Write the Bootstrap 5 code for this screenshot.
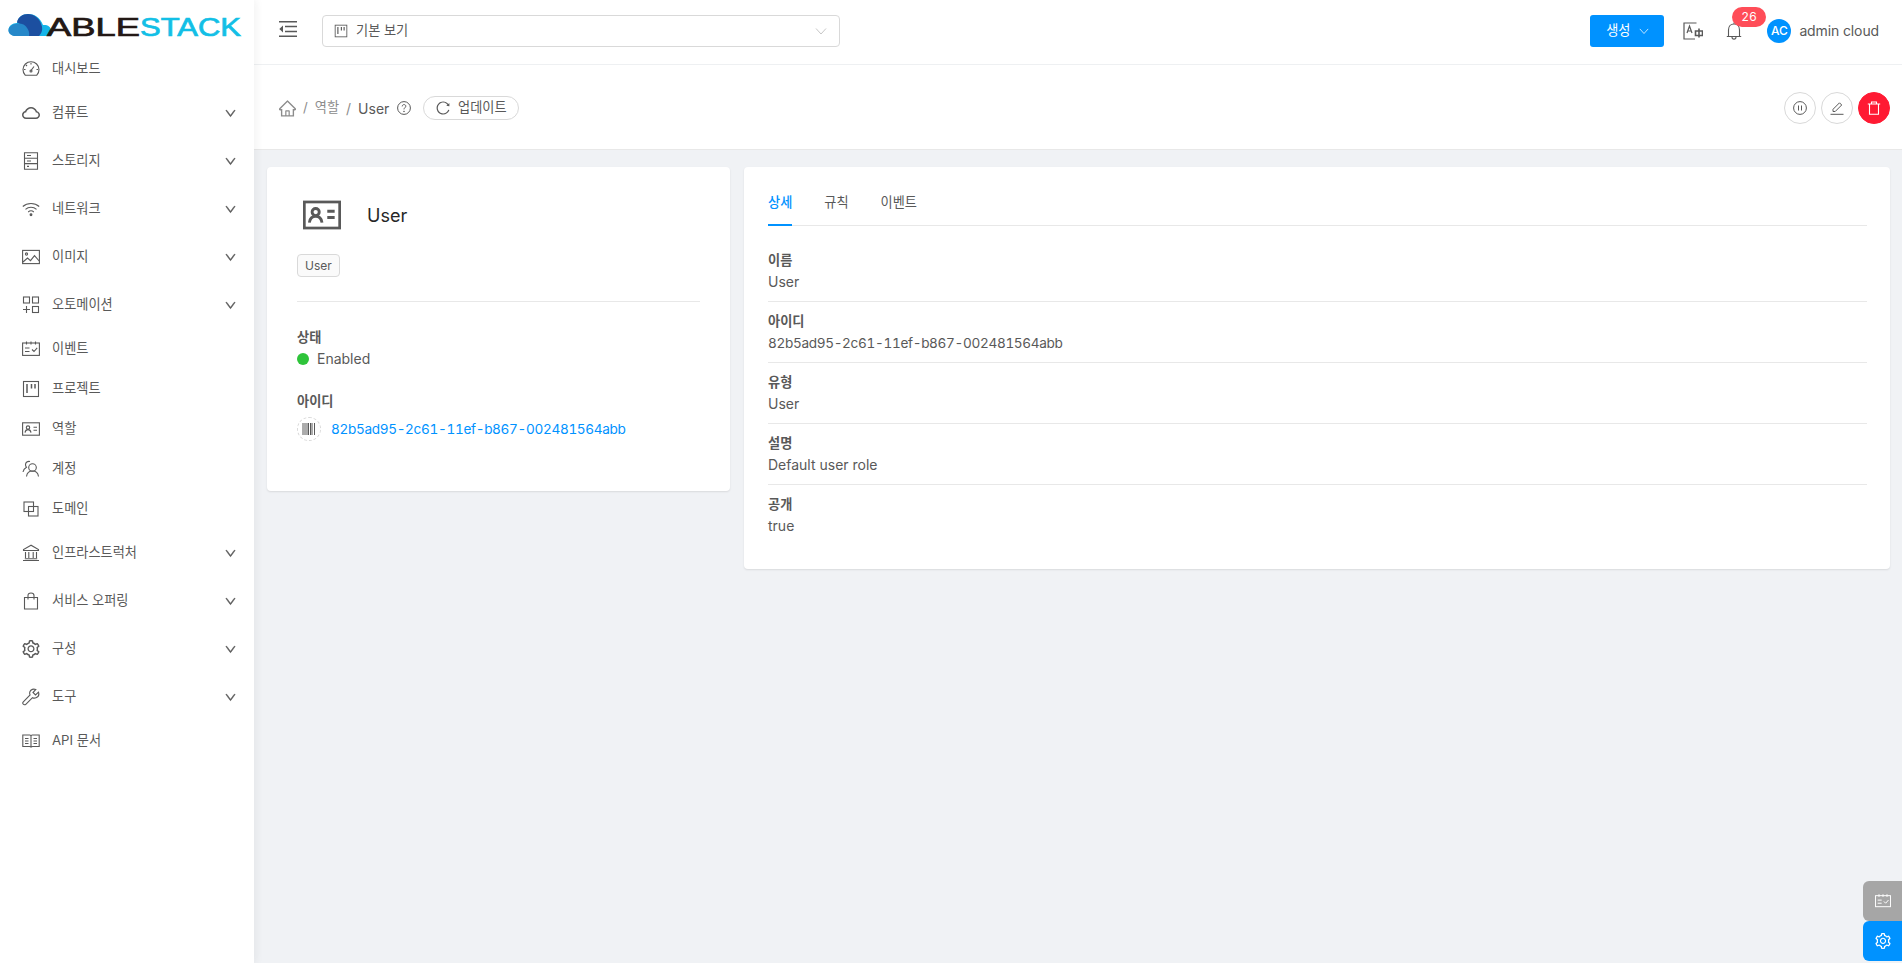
<!DOCTYPE html>
<html lang="ko">
<head>
<meta charset="utf-8">
<title>ABLESTACK</title>
<link rel="stylesheet" href="https://cdn.jsdelivr.net/npm/bootstrap@5.3.0/dist/css/bootstrap.min.css">
<style>
html,body{height:100%}
body{font-family:Inter,"Noto Sans CJK KR",sans-serif;font-size:14px;color:#595959;background:#f0f2f5;overflow:hidden}
svg{display:block;flex:none}
.ko{font-size:13.2px}
.uid{font-feature-settings:"tnum";font-variant-numeric:tabular-nums;font-size:13.6px;letter-spacing:-.34px}
.app-shell{height:963px}
.side{width:254px;flex:none;background:#fff;box-shadow:2px 0 8px rgba(29,35,41,.06);z-index:2}
.brand{height:49px;padding:13px 0 0 8px}
.brand text{font-family:"Liberation Sans",sans-serif;font-weight:400;font-size:25px;stroke-width:.7px}
.side-item{height:40px;padding:0 17px 0 22px;color:#595959;text-decoration:none;gap:12px}
.side-item.tall{height:48px}
.side-item .chev{margin-left:auto}
.ico{width:18px;height:18px;fill:none;stroke:#595959;stroke-width:1.1}
.ico-fill{width:18px;height:18px;fill:#595959}
.chev{width:11px;height:11px;fill:#595959;stroke:#595959;stroke-width:40px;margin-right:1px}
.main-col{min-width:0}
.topbar{height:65px;background:#fff;border-bottom:1px solid #eef0f2;padding:0 23px 3px 25px}
.view-select{width:518px;height:32px;border:1px solid #d9d9d9;border-radius:4px;padding:0 11px;margin-left:25px;gap:8px;background:#fff}
.view-select .chev{margin-left:auto;stroke-width:0}
.burger{margin-bottom:3px}
.make-btn{width:74px;height:32px;background:#0092ff;border:0;border-radius:3px;color:#fff;gap:8px;padding:0}
.make-btn:hover{background:#0092ff;color:#fff}
.make-btn .chev{stroke-width:0;margin-right:0}
.lang-ico{margin-left:19px}
.alert-wrap{width:34px;height:34px;margin-left:14px}
.count-pill{top:-7px;left:15px;min-width:34px;height:20px;padding:0 8px;background:#ff4d58;border-radius:10px;font-size:12px;font-weight:400;line-height:20px;letter-spacing:.4px}
.avatar-dot{width:24px;height:24px;border-radius:50%;background:#0092ff;color:#fff;font-size:12px;font-weight:500;margin-left:16px}
.user-name{letter-spacing:-.12px}
.crumbbar{height:85px;background:#fff;border-bottom:1px solid #e8e8e8;padding:2px 12px 0 25px}
.crumbbar .breadcrumb{margin:0;--bs-breadcrumb-divider-color:#8c8c8c;--bs-breadcrumb-item-active-color:#595959;--bs-breadcrumb-item-padding-x:7px}
.crumbbar .breadcrumb-item{display:flex;align-items:center}
.crumbbar .faded{color:#8c8c8c}
.refresh-btn{height:24px;width:96px;border:1px solid #d9d9d9;border-radius:12px;background:#fff;color:#595959;gap:8px;padding:0;margin-left:12px}
.act-group{gap:5px}
.round-act{width:32px;height:32px;border-radius:50%;border:1px solid #d9d9d9;background:#fff;padding:0}
.round-act.danger{background:#ff1a33;border-color:#ff1a33}
.content-area{padding:17px 12px 0 13px;gap:14px;align-items:flex-start}
.panel{border:0;border-radius:4px;box-shadow:0 1px 2px rgba(0,0,0,.1);color:#595959}
.panel-left{width:463px;height:324px;padding:30px 30px 0}
.panel-right{flex:1;height:402px;padding:12px 23px 0 24px}
.head-ico{width:38px;height:30px;margin-left:6px;stroke-width:1.35}
.head-row{height:36px}
.head-name{font-size:18px;color:#262626;font-weight:400;margin-left:26px}
.user-tag{height:23px;padding:0 7px;margin-top:21px;background:#fafafa;border:1px solid #d9d9d9;border-radius:4px;font-size:12px;color:#595959;line-height:21px}
.rule{height:1px;background:#e8e8e8;margin:24px 0 0}
.lab{font-weight:600;font-size:13.2px;line-height:22px;color:#595959}
.first-lab{margin-top:24px}
.second-lab{margin-top:20px}
.status-dot{width:12px;height:12px;border-radius:50%;background:#2ec43a;margin-right:8px}
.status-line{line-height:22px}
.code-row{margin-top:5px}
.code-ring{width:24px;height:24px;border:1px dashed #d9d9d9;border-radius:50%;margin-right:10px}
.id-link{color:#0092ff;text-decoration:none}
.tab-strip{height:47px;border-bottom:1px solid #e8e8e8;gap:32px;--bs-nav-tabs-border-width:0}
.tab-strip .nav-link{padding:0;height:47px;line-height:46px;color:#595959;border:0;background:none;border-radius:0;position:relative}
.tab-strip .nav-link.active{color:#0092ff;font-weight:500;background:none;border-bottom:2px solid #0092ff}
.info-row{height:61px;border-bottom:1px solid #e8e8e8;padding:8px 0 0;line-height:22px;background:none;border-left:0;border-right:0;border-top:0;color:#595959}
.info-row:last-child{border-bottom:0}
.info-list{margin-top:15px}
.float-tab{right:0;width:39px;height:40px;border-radius:6px 0 0 6px;z-index:5}
.float-tab.grey{top:881px;background:#a6a6a6}
.float-tab.blue{top:921px;background:#0092ff}
.float-ico{width:16px;height:16px;stroke:#fff}
.mini-ico{width:14px;height:14px}
.thin-grey{width:12px;height:12px;color:#bfbfbf}
.thin-white{width:10px;height:10px;color:#fff}
</style>
</head>
<body>
<svg width="0" height="0" class="position-absolute">
<defs>
<symbol id="i-down" viewBox="64 64 896 896"><path d="M884 256h-75c-5.1 0-9.9 2.5-12.9 6.6L512 654.2 227.9 262.6c-3-4.1-7.8-6.6-12.9-6.6h-75c-6.5 0-10.3 7.4-6.5 12.7l352.6 486.1c12.8 17.6 39 17.6 51.7 0l352.6-486.1c3.9-5.3.1-12.7-6.4-12.7z"/></symbol>
<symbol id="i-thin" viewBox="0 0 12 12"><path d="M1 3.5 6 9l5-5.5" fill="none" stroke="currentColor" stroke-width=".9"/></symbol>
<symbol id="i-set" viewBox="64 64 896 896"><path d="M924.8 625.7l-65.5-56c3.1-19 4.7-38.4 4.7-57.8s-1.6-38.8-4.7-57.8l65.5-56a32.03 32.03 0 0 0 9.3-35.2l-.9-2.6a443.74 443.74 0 0 0-79.7-137.9l-1.8-2.1a32.12 32.12 0 0 0-35.1-9.5l-81.3 28.9c-30-24.6-63.5-44-99.7-57.6l-15.7-85a32.05 32.05 0 0 0-25.8-25.7l-2.7-.5c-52.1-9.4-106.9-9.4-159 0l-2.7.5a32.05 32.05 0 0 0-25.8 25.7l-15.8 85.4a351.86 351.86 0 0 0-99 57.4l-81.9-29.1a32 32 0 0 0-35.1 9.5l-1.8 2.1a446.02 446.02 0 0 0-79.7 137.9l-.9 2.6c-4.5 12.5-.8 26.5 9.3 35.2l66.3 56.6c-3.1 18.8-4.6 38-4.6 57.1 0 19.2 1.5 38.4 4.6 57.1L99 625.5a32.03 32.03 0 0 0-9.3 35.2l.9 2.6c18.1 50.4 44.9 96.9 79.7 137.9l1.8 2.1a32.12 32.12 0 0 0 35.1 9.5l81.9-29.1c29.8 24.5 63.1 43.9 99 57.4l15.8 85.4a32.05 32.05 0 0 0 25.8 25.7l2.7.5a449.4 449.4 0 0 0 159 0l2.7-.5a32.05 32.05 0 0 0 25.8-25.7l15.7-85a350 350 0 0 0 99.7-57.6l81.3 28.9a32 32 0 0 0 35.1-9.5l1.8-2.1c34.8-41.1 61.6-87.5 79.7-137.9l.9-2.6c4.5-12.3.8-26.3-9.3-35zM788.3 465.9c2.5 15.1 3.8 30.6 3.8 46.1s-1.3 31-3.8 46.1l-6.6 40.1 74.7 63.9a370.03 370.03 0 0 1-42.6 73.6L721 702.8l-31.4 25.8c-23.9 19.6-50.5 35-79.3 45.8l-38.1 14.3-17.9 97a377.5 377.5 0 0 1-85 0l-17.9-97.2-37.8-14.5c-28.5-10.8-55-26.2-78.7-45.7l-31.4-25.9-93.4 33.2c-17-22.9-31.2-47.6-42.6-73.6l75.5-64.5-6.5-40c-2.4-14.9-3.7-30.3-3.7-45.5 0-15.3 1.2-30.6 3.7-45.5l6.5-40-75.5-64.5c11.3-26.1 25.6-50.7 42.6-73.6l93.4 33.2 31.4-25.9c23.7-19.5 50.2-34.9 78.7-45.7l37.9-14.3 17.9-97.2c28.1-3.2 56.8-3.2 85 0l17.9 97 38.1 14.3c28.7 10.8 55.4 26.2 79.3 45.8l31.4 25.8 92.8-32.9c17 22.9 31.2 47.6 42.6 73.6L781.8 426l6.5 39.9zM512 326c-97.2 0-176 78.8-176 176s78.8 176 176 176 176-78.8 176-176-78.8-176-176-176zm79.2 255.2A111.6 111.6 0 0 1 512 614c-29.9 0-58-11.7-79.2-32.8A111.6 111.6 0 0 1 400 502c0-29.9 11.7-58 32.8-79.2C454 401.6 482.1 390 512 390c29.9 0 58 11.6 79.2 32.8A111.6 111.6 0 0 1 624 502c0 29.9-11.7 58-32.8 79.2z"/></symbol>
<symbol id="i-cloud" viewBox="64 64 896 896"><path d="M811.4 418.7C765.6 297.9 648.9 212 512.2 212S258.8 297.8 213 418.6C127.3 441.1 64 519.1 64 612c0 110.5 89.5 200 199.9 200h496.2C870.5 812 960 722.5 960 612c0-92.7-63.1-170.7-148.6-193.3zm36.3 281a123.07 123.07 0 0 1-87.6 36.3H263.9c-33.1 0-64.2-12.9-87.6-36.3A123.3 123.3 0 0 1 140 612c0-28 9.1-54.3 26.2-76.3a125.7 125.7 0 0 1 66.1-43.7l37.9-9.9 13.9-36.6c8.6-22.8 20.6-44.1 35.7-63.4a245.6 245.6 0 0 1 52.4-49.9c41.1-28.9 89.5-44.2 140-44.2s98.9 15.3 140 44.2c19.9 14 37.5 30.8 52.4 49.9 15.1 19.3 27.1 40.6 35.7 63.4l13.8 36.5 37.8 10c54.3 14.5 92.1 63.8 92.1 120 0 33.1-12.9 64.3-36.3 87.7z"/></symbol>
<symbol id="i-home" viewBox="64 64 896 896"><path d="M946.5 505L560.1 118.8l-25.9-25.9a31.5 31.5 0 0 0-44.4 0L77.5 505a63.9 63.9 0 0 0-18.8 46c.4 35.2 29.7 63.3 64.9 63.3h42.5V940h691.8V614.3h43.4c17.1 0 33.2-6.7 45.3-18.8a63.6 63.6 0 0 0 18.7-45.3c0-17-6.7-33.1-18.8-45.2zM568 868H456V664h112v204zm217.9-325.7V868H632V640c0-22.1-17.9-40-40-40H432c-22.1 0-40 17.9-40 40v228H238.1V542.3h-96l370-369.7 23.1 23.1L882 542.3h-96.1z"/></symbol>
<symbol id="i-reload" viewBox="64 64 896 896"><path d="M909.1 209.3l-56.4 44.1C775.8 155.1 656.2 92 521.9 92 290 92 102.3 279.5 102 511.5 101.7 743.7 289.8 932 521.9 932c181.3 0 335.8-115 394.6-276.1 1.5-4.2-.7-8.9-4.9-10.3l-56.7-19.5a8 8 0 0 0-10.1 4.8c-1.8 5-3.8 10-5.9 14.9-17.3 41-42.1 77.8-73.7 109.4A344.77 344.77 0 0 1 655.9 829c-42.3 17.9-87.4 27-133.8 27-46.5 0-91.5-9.1-133.8-27A341.5 341.5 0 0 1 279 755.2a342.16 342.16 0 0 1-73.7-109.4c-17.9-42.4-27-87.4-27-133.9s9.1-91.5 27-133.9c17.3-41 42.1-77.8 73.7-109.4 31.6-31.6 68.4-56.4 109.3-73.8 42.3-17.9 87.4-27 133.8-27 46.5 0 91.5 9.1 133.8 27a341.5 341.5 0 0 1 109.3 73.8c9.9 9.9 19.2 20.4 27.8 31.4l-60.2 47a8 8 0 0 0 3 14.1l175.6 43c5 1.2 9.9-2.6 9.9-7.7l.8-180.9c-.1-6.6-7.8-10.3-13-6.2z"/></symbol>
<symbol id="i-event" viewBox="0 0 18 18"><rect x=".6" y="3" width="16.8" height="12.4"/><path d="M4.5 1.4v3M9 1.4v3M13.5 1.4v3M3 8h4.5M3 11.5h4.5M10 9.5l2 2 3.2-3.6"/></symbol>
<symbol id="i-board" viewBox="0 0 18 18"><rect x="1.5" y="1.5" width="15" height="15"/><path d="M5 4v9M9.5 4v4.5M13 4v4.5" stroke-width="1.5"/></symbol>
<symbol id="i-idcard" viewBox="0 0 18 14"><rect x=".6" y=".8" width="16.8" height="12.4"/><circle cx="6" cy="5.6" r="1.7"/><path d="M3 10.6c.3-2 1.4-3 3-3s2.7 1 3 3M11.5 5.2h3.5M11.5 8.2h3.5"/></symbol>
</defs>
</svg>

<div class="app-shell d-flex">
<aside class="side">
  <div class="brand">
    <svg width="234" height="26" viewBox="0 0 234 26">
      <path d="M8 23h29c3.600 0 6-2.400 6-5.500 0-2.800-2-5-5-5.500h-3C32 4 26 1 20 1 14.500 1 10 4 9 10 4.500 10 .5 13 .5 17c0 3.500 3.200 6 7.500 6z" fill="#14b4e8"/>
      <path d="M17 23h14c3-3 4-7 2.500-11C31.500 5 26 1 20 1 14.500 1 10 4 9 9.500c5 1.500 9 7.500 8 13.500z" fill="#1c4fa0"/>
      <path d="M8 23h13c1-4-1.500-9-5.500-11.500C9 9 .5 12 .5 17.500 .5 21 4 23 8 23z" fill="#2688c9"/>
      <text x="39" y="22.500" textLength="93" lengthAdjust="spacingAndGlyphs" fill="#231815" stroke="#231815">ABLE</text>
      <text x="132" y="22.500" textLength="101" lengthAdjust="spacingAndGlyphs" fill="#12bfe6" stroke="#12bfe6">STACK</text>
    </svg>
  </div>
  <nav class="nav flex-column">
    <a class="side-item d-flex align-items-center" href="#"><svg class="ico" viewBox="0 0 18 18"><path d="M3.200 15.200a8 8 0 1 1 11.600 0zM9 10.500l3-4M9 3v1.500M4 5l1 1M2 9.500h1.500M14.500 9.500H16"/><circle cx="9" cy="11" r="1"/></svg><span class="ko">대시보드</span></a>
    <a class="side-item tall d-flex align-items-center" href="#"><svg class="ico-fill"><use href="#i-cloud"/></svg><span class="ko">컴퓨트</span><svg class="chev"><use href="#i-down"/></svg></a>
    <a class="side-item tall d-flex align-items-center" href="#"><svg class="ico" viewBox="0 0 18 18"><path d="M2.500.8h13v16.400h-13zM2.500 6.200h13M2.500 11.600h13M5 3.500h4M5 9h4M5 14.400h2"/></svg><span class="ko">스토리지</span><svg class="chev"><use href="#i-down"/></svg></a>
    <a class="side-item tall d-flex align-items-center" href="#"><svg class="ico" viewBox="0 0 18 18"><path d="M.8 6.500c4.500-4 11.900-4 16.400 0M3.500 9.300c3-2.700 8-2.700 11 0M6.200 12c1.600-1.400 4-1.400 5.600 0"/><circle cx="9" cy="14.800" r=".9" fill="#595959"/></svg><span class="ko">네트워크</span><svg class="chev"><use href="#i-down"/></svg></a>
    <a class="side-item tall d-flex align-items-center" href="#"><svg class="ico" viewBox="0 0 18 18"><rect x=".6" y="2.400" width="16.800" height="13.200"/><circle cx="4.500" cy="6" r="1.100"/><path d="M1 14l4.500-4 3 2.600 4-5 4.700 5.400"/></svg><span class="ko">이미지</span><svg class="chev"><use href="#i-down"/></svg></a>
    <a class="side-item tall d-flex align-items-center" href="#"><svg class="ico" viewBox="0 0 18 18"><rect x="1.500" y="1" width="6" height="6"/><rect x="10.500" y="1" width="6" height="6"/><rect x="10.500" y="10.500" width="6" height="6"/><path d="M1 13.500h7M4.500 10v7"/></svg><span class="ko">오토메이션</span><svg class="chev"><use href="#i-down"/></svg></a>
    <a class="side-item d-flex align-items-center" href="#"><svg class="ico"><use href="#i-event"/></svg><span class="ko">이벤트</span></a>
    <a class="side-item d-flex align-items-center" href="#"><svg class="ico"><use href="#i-board"/></svg><span class="ko">프로젝트</span></a>
    <a class="side-item d-flex align-items-center" href="#"><svg class="ico"><use href="#i-idcard"/></svg><span class="ko">역할</span></a>
    <a class="side-item d-flex align-items-center" href="#"><svg class="ico" viewBox="0 0 18 18"><circle cx="10.500" cy="7.500" r="3.800"/><path d="M4.500 16.500c.5-3.600 2.800-5.500 6-5.500s5.500 1.900 6 5.500M8 1.500c-2.500-.6-4.500 1-4.500 3.300 0 1 .4 1.800 1 2.500C2.700 8.300 1.500 9.800 1 12"/></svg><span class="ko">계정</span></a>
    <a class="side-item d-flex align-items-center" href="#"><svg class="ico" viewBox="0 0 18 18"><rect x="2" y="2" width="9.500" height="9.500"/><rect x="6.500" y="6.500" width="9.500" height="9.500"/></svg><span class="ko">도메인</span></a>
    <a class="side-item tall d-flex align-items-center" href="#"><svg class="ico" viewBox="0 0 18 18"><path d="M9 1.200 1.500 5.500v1h15v-1zM1 16.500h16M2.800 14.800h12.400M3.500 8v6M6.800 8v6M11.200 8v6M14.500 8v6"/></svg><span class="ko">인프라스트럭처</span><svg class="chev"><use href="#i-down"/></svg></a>
    <a class="side-item tall d-flex align-items-center" href="#"><svg class="ico" viewBox="0 0 18 18"><path d="M2.500 5.500h13v11.500h-13zM6 7.500V3.500c0-3.300 6-3.300 6 0v4"/></svg><span class="ko">서비스 오퍼링</span><svg class="chev"><use href="#i-down"/></svg></a>
    <a class="side-item tall d-flex align-items-center" href="#"><svg class="ico-fill"><use href="#i-set"/></svg><span class="ko">구성</span><svg class="chev"><use href="#i-down"/></svg></a>
    <a class="side-item tall d-flex align-items-center" href="#"><svg class="ico" viewBox="0 0 18 18"><path d="M16.500 4.200 13.500 7 11 4.500 13.800 1.500C11.500.6 8.800 1.400 8 3.500c-.5 1.300-.4 2.600.1 3.500L1.300 13.800c-.8.800-.6 1.700 0 2.400.7.700 1.700.9 2.500.1L10.500 9.700c1 .5 2.300.6 3.500.1 2.200-.9 3.300-3.300 2.500-5.600z"/></svg><span class="ko">도구</span><svg class="chev"><use href="#i-down"/></svg></a>
    <a class="side-item d-flex align-items-center" href="#"><svg class="ico" viewBox="0 0 18 18"><path d="M.8 3h7c.7 0 1.200.5 1.200 1.200 0-.7.500-1.200 1.200-1.200h7v11.500h-6.700c-.8 0-1.500.4-1.500 1-.1-.6-.7-1-1.500-1H.8zM9 4.200v11.300M3 6.500h3.500M3 9h3.500M3 11.500h3.500M11.500 6.500H15M11.500 9H15M11.500 11.500H15"/></svg><span class="ko">API 문서</span></a>
  </nav>
</aside>

<div class="main-col flex-grow-1 d-flex flex-column">
  <header class="topbar d-flex align-items-center">
    <svg class="burger" width="18" height="16" viewBox="0 0 18 16" fill="#595959"><path d="M0 0h18v1.500H0zM0 14.500h18V16H0zM6 4.800h12v1.400H6zM6 9.800h12v1.400H6zM4 4.500v7L.3 8z"/></svg>
    <div class="view-select d-flex align-items-center">
      <svg class="ico mini-ico"><use href="#i-board"/></svg>
      <span class="ko">기본 보기</span>
      <svg class="chev thin-grey"><use href="#i-thin"/></svg>
    </div>
    <div class="ms-auto d-flex align-items-center">
      <button class="btn make-btn d-flex align-items-center justify-content-center"><span class="ko">생성</span><svg class="chev thin-white"><use href="#i-thin"/></svg></button>
      <svg class="lang-ico" width="20" height="20" viewBox="0 0 20 18" fill="none" stroke="#595959" stroke-width="1.200"><path d="M13.500 1H1v16h11M10.500 17h1"/><path d="M4 11l2.500-7L9 11M4.800 9h3.400"/><path d="M12.500 9h7v4.500h-7zM16 6.500v9" stroke-width="1.600"/></svg>
      <div class="alert-wrap position-relative d-flex align-items-center justify-content-center">
        <svg width="16" height="18" viewBox="0 0 16 18" fill="none" stroke="#595959" stroke-width="1.100"><path d="M.8 14.500h14.400M2.500 14.500V8c0-3.500 2.200-6 5.500-6s5.500 2.500 5.500 6v6.500M8 .5V2M6 15c0 2.800 4 2.800 4 0"/></svg>
        <span class="badge count-pill position-absolute">26</span>
      </div>
      <span class="avatar-dot d-flex align-items-center justify-content-center">AC</span>
      <span class="ms-2 user-name">admin cloud</span>
    </div>
  </header>

  <div class="crumbbar d-flex align-items-center">
    <ol class="breadcrumb align-items-center">
      <li class="breadcrumb-item"><svg width="17" height="17" fill="#8c8c8c"><use href="#i-home"/></svg></li>
      <li class="breadcrumb-item faded ko">역할</li>
      <li class="breadcrumb-item active">User</li>
    </ol>
    <svg class="ms-2" width="14" height="14" viewBox="0 0 14 14" fill="none" stroke="#595959"><circle cx="7" cy="7" r="6.400"/><path d="M5.200 5.400C5.200 3 8.800 3 8.800 5.200c0 1.500-1.800 1.500-1.800 3.200"/><circle cx="7" cy="10.400" r=".4"/></svg>
    <button class="btn refresh-btn d-flex align-items-center justify-content-center"><svg width="14" height="14" fill="#595959"><use href="#i-reload"/></svg><span class="ko">업데이트</span></button>
    <div class="ms-auto d-flex act-group align-items-center">
      <button class="btn round-act d-flex align-items-center justify-content-center"><svg width="14" height="14" viewBox="0 0 14 14" fill="none" stroke="#595959"><circle cx="7" cy="7" r="6.400"/><path d="M5.500 4.500v5M8.500 4.500v5"/></svg></button>
      <button class="btn round-act d-flex align-items-center justify-content-center"><svg width="14" height="14" viewBox="0 0 14 14" fill="none" stroke="#595959"><path d="M.5 13.300h13M3 10.500V8.300l6.500-6.500 2.200 2.200L5.200 10.500z"/></svg></button>
      <button class="btn round-act danger d-flex align-items-center justify-content-center"><svg width="14" height="14" viewBox="0 0 14 14" fill="none" stroke="#fff" stroke-width="1.100"><path d="M.8 3h12.400M4.500 3V1h5v2M2.500 3v10.300h9V3"/></svg></button>
    </div>
  </div>

  <main class="content-area d-flex">
    <section class="card panel panel-left">
      <div class="head-row d-flex align-items-center">
        <svg class="ico head-ico" viewBox="0 0 18 14"><use href="#i-idcard"/></svg>
        <span class="head-name">User</span>
      </div>
      <div><span class="user-tag d-inline-block">User</span></div>
      <div class="rule"></div>
      <div class="lab first-lab">상태</div>
      <div class="d-flex align-items-center status-line"><span class="status-dot"></span><span>Enabled</span></div>
      <div class="lab second-lab">아이디</div>
      <div class="d-flex align-items-center code-row">
        <span class="code-ring d-flex align-items-center justify-content-center"><svg width="14" height="12" viewBox="0 0 14 12" fill="none" stroke="#595959"><path d="M1 0v12M3 0v12M5 0v12M6.500 0v12M8.500 0v12M10 0v12M12.500 0v12"/></svg></span>
        <a href="#" class="id-link uid">82b5ad95-2c61-11ef-b867-002481564abb</a>
      </div>
    </section>

    <section class="card panel panel-right">
      <ul class="nav nav-tabs tab-strip">
        <li class="nav-item"><a class="nav-link active ko" href="#">상세</a></li>
        <li class="nav-item"><a class="nav-link ko" href="#">규칙</a></li>
        <li class="nav-item"><a class="nav-link ko" href="#">이벤트</a></li>
      </ul>
      <div class="list-group list-group-flush info-list">
        <div class="list-group-item info-row"><div class="lab">이름</div><div>User</div></div>
        <div class="list-group-item info-row"><div class="lab">아이디</div><div class="uid">82b5ad95-2c61-11ef-b867-002481564abb</div></div>
        <div class="list-group-item info-row"><div class="lab">유형</div><div>User</div></div>
        <div class="list-group-item info-row"><div class="lab">설명</div><div>Default user role</div></div>
        <div class="list-group-item info-row"><div class="lab">공개</div><div>true</div></div>
      </div>
    </section>
  </main>
</div>
</div>

<div class="float-tab grey position-fixed d-flex align-items-center justify-content-center"><svg class="ico float-ico"><use href="#i-event"/></svg></div>
<div class="float-tab blue position-fixed d-flex align-items-center justify-content-center"><svg width="16" height="16" fill="#fff"><use href="#i-set"/></svg></div>
</body>
</html>
